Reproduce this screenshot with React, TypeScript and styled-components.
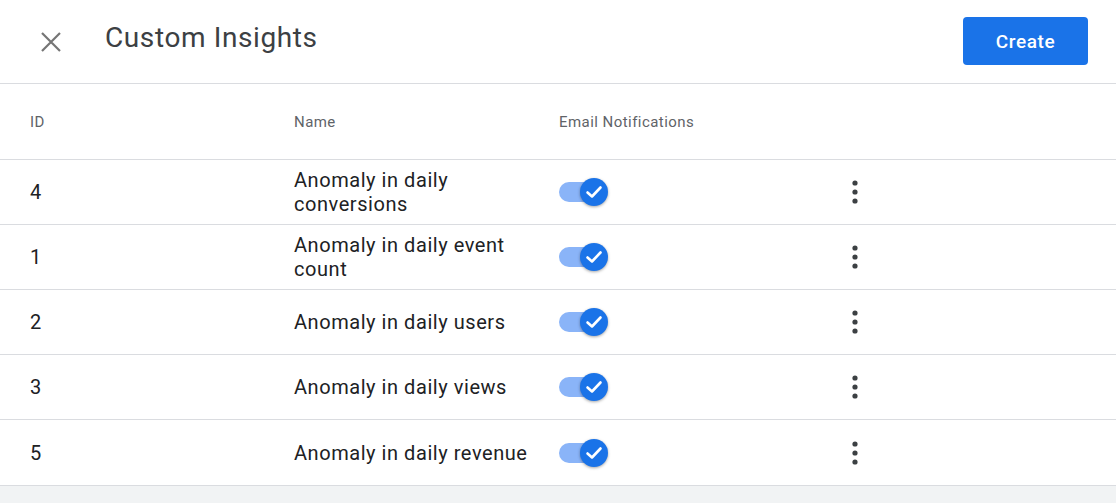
import React from 'react'
import styled, { createGlobalStyle } from 'styled-components'

const GlobalStyle = createGlobalStyle`
	html, body {
		margin: 0;
		padding: 0;
		background: #f1f3f4;
		font-family: Roboto, 'Liberation Sans', sans-serif;
	}
`

type Insight = { id: number; name: string; email: boolean }

const insights: Insight[] = [
	{ id: 4, name: 'Anomaly in daily conversions', email: true },
	{ id: 1, name: 'Anomaly in daily event count', email: true },
	{ id: 2, name: 'Anomaly in daily users', email: true },
	{ id: 3, name: 'Anomaly in daily views', email: true },
	{ id: 5, name: 'Anomaly in daily revenue', email: true },
]

const CloseIcon: React.FC = () => (
	<svg width="22" height="22" viewBox="0 0 22 22">
		<path d="M2 2 L20 20 M20 2 L2 20" stroke="#757575" strokeWidth="2.2" />
	</svg>
)

const KebabIcon: React.FC = () => (
	<svg width="24" height="24" viewBox="0 0 24 24">
		<circle cx="12" cy="3" r="2.6" fill="#3c4043" />
		<circle cx="12" cy="12" r="2.6" fill="#3c4043" />
		<circle cx="12" cy="21" r="2.6" fill="#3c4043" />
	</svg>
)

const Toggle: React.FC<{ on: boolean }> = ({ on }) => (
	<StyledToggle>
		<StyledTrack on={on} />
		<StyledThumb on={on}>
			<svg width="20" height="20" viewBox="0 0 20 20">
				<path d="M3.5 10.5 L8 14.5 L16.5 5.5" stroke="#fff" strokeWidth="2.6" fill="none" strokeLinecap="round" strokeLinejoin="round" />
			</svg>
		</StyledThumb>
	</StyledToggle>
)

const App: React.FC = () => (
	<>
		<GlobalStyle />
		<StyledPage>
			<StyledHeader>
				<StyledCloseButton>
					<CloseIcon />
				</StyledCloseButton>
				<StyledTitle>Custom Insights</StyledTitle>
				<StyledCreateButton>Create</StyledCreateButton>
			</StyledHeader>
			<StyledHeadRow>
				<StyledHeadCell>ID</StyledHeadCell>
				<StyledHeadCell>Name</StyledHeadCell>
				<StyledHeadCell>Email Notifications</StyledHeadCell>
				<StyledHeadCell />
			</StyledHeadRow>
			{insights.map((item) => (
				<StyledRow key={item.id}>
					<StyledCell>{item.id}</StyledCell>
					<StyledNameCell>{item.name}</StyledNameCell>
					<StyledCell>
						<Toggle on={item.email} />
					</StyledCell>
					<StyledCell>
						<KebabIcon />
					</StyledCell>
				</StyledRow>
			))}
		</StyledPage>
	</>
)

const StyledPage = styled.div`
	background: #fff;
	border-bottom: 1px solid #dadce0;
`

const StyledHeader = styled.div`
	display: flex;
	align-items: center;
	height: 83px;
	padding: 0 28px 0 40px;
	border-bottom: 1px solid #dadce0;
`

const StyledCloseButton = styled.div`
	display: flex;
	width: 22px;
	height: 22px;
	margin-top: 1px;
`

const StyledTitle = styled.h1`
	flex: 1;
	margin: 0 0 8px 43px;
	font-family: Roboto, 'Liberation Sans', sans-serif;
	font-size: 28px;
	font-weight: 400;
	color: #3c4043;
	letter-spacing: 0.6px;
`

const StyledCreateButton = styled.button`
	width: 125px;
	height: 48px;
	margin-top: -1px;
	border: none;
	border-radius: 4px;
	background: #1a73e8;
	color: #fff;
	font-family: Roboto, 'Liberation Sans', sans-serif;
	font-size: 19px;
	font-weight: 500;
	letter-spacing: 0.6px;
`

const StyledHeadRow = styled.div`
	display: grid;
	grid-template-columns: 264px 265px 284px 1fr;
	align-items: center;
	height: 75px;
	padding-left: 30px;
	border-bottom: 1px solid #dadce0;
`

const StyledHeadCell = styled.div`
	font-size: 15px;
	letter-spacing: 0.45px;
	color: #5f6368;
`

const StyledRow = styled.div`
	display: grid;
	grid-template-columns: 264px 265px 284px 1fr;
	align-items: center;
	height: 64px;
	padding-left: 30px;
	border-bottom: 1px solid #dadce0;

	&:last-child {
		height: 65px;
		border-bottom: none;
	}
`

const StyledCell = styled.div`
	display: flex;
	align-items: center;
	font-size: 20px;
	color: #202124;
`

const StyledNameCell = styled.div`
	padding-right: 20px;
	font-size: 20px;
	letter-spacing: 0.55px;
	line-height: 24px;
	color: #202124;
`

const StyledToggle = styled.div`
	position: relative;
	width: 50px;
	height: 28px;
`

const StyledTrack = styled.div<{ on: boolean }>`
	position: absolute;
	left: 0;
	top: 4px;
	width: 40px;
	height: 20px;
	border-radius: 10px;
	background: ${(p) => (p.on ? '#8ab4f8' : '#bdc1c6')};
`

const StyledThumb = styled.div<{ on: boolean }>`
	position: absolute;
	left: ${(p) => (p.on ? '21px' : '0')};
	top: 0;
	width: 28px;
	height: 28px;
	border-radius: 50%;
	background: ${(p) => (p.on ? '#1a73e8' : '#fff')};
	box-shadow: 0 1px 3px rgba(0, 0, 0, 0.35);
	display: flex;
	align-items: center;
	justify-content: center;
`

export default App
